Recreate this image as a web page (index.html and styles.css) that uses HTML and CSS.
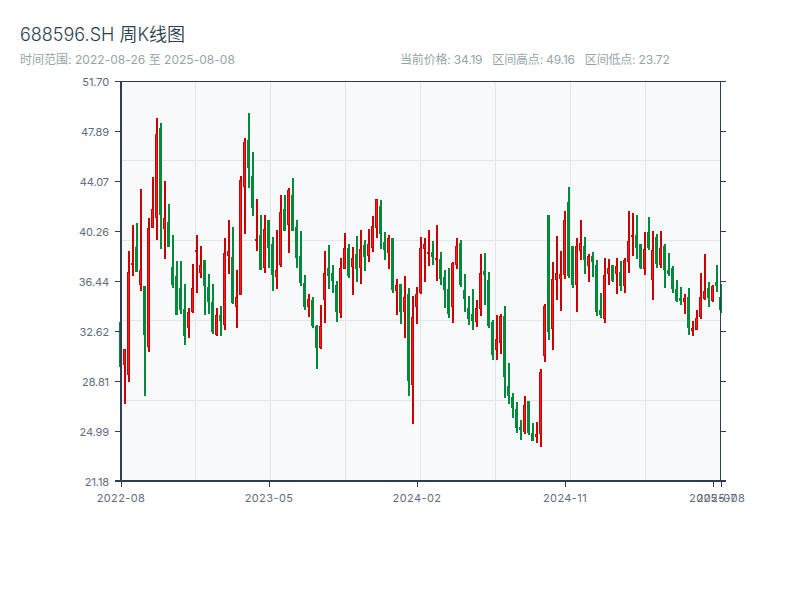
FILE: index.html
```html
<!DOCTYPE html>
<html>

<head>
    <meta charset="UTF-8">
    <title>688596.SH 周K线图</title>
    <link rel="stylesheet" href="styles.css">
</head>

<body>
    <div class="header">
        <h1 class="title">688596.SH 周K线图</h1>
        <div class="meta">
            <div class="range">时间范围: 2022-08-26 至 2025-08-08</div>
            <div class="stats">
                <span>当前价格: 34.19</span>
                <span>区间高点: 49.16</span>
                <span>区间低点: 23.72</span>
            </div>
        </div>
    </div>

    <svg id="chart" class="chart" width="800" height="450" viewBox="0 70 800 450"></svg>

    <script src="chart.js"></script>
</body>

</html>
```

FILE: styles.css
```css
body {
    font-family: Inter, "Noto Sans CJK SC", sans-serif;
    margin: 0;
    padding: 0;
    background-color: #fff;
    overflow: hidden;
}

.header {
    height: 70px;
    padding: 0 20px;
    box-sizing: border-box;
}

.title {
    margin: 0;
    padding-top: 23px;
    font-size: 18px;
    line-height: 24px;
    font-weight: 350;
    color: #2c3e50;
}

.meta {
    display: grid;
    grid-template-columns: 380px 1fr;
    margin-top: 4px;
    font-size: 12px;
    line-height: 18px;
    color: #95a5a6;
}

.range {
    letter-spacing: 0.03px;
}

.stats {
    display: flex;
    gap: 10px;
    letter-spacing: -0.18px;
}

.chart {
    display: block;
}

.plot-bg {
    fill: #f8f9fb;
}

.grid-line {
    stroke: #e3e5ea;
    stroke-width: 1;
}

.axis-line {
    stroke: #2c3e50;
    stroke-width: 1;
}

.axis-line.thick {
    stroke-width: 2;
}

.axis-label {
    font-size: 11px;
    fill: #5d6d7e;
}

.axis-label.price {
    letter-spacing: -0.1px;
}

.axis-label.date {
    letter-spacing: 0.4px;
}

.wick-up {
    fill: #cc0000;
}

.body-up {
    fill: #ff1a1a;
    stroke: #cc0000;
    stroke-width: 1;
}

.wick-down,
.body-down {
    fill: #008a3a;
}
```

FILE: chart.js
```js
// [direction, wick top, wick bottom, body top, body bottom] in page pixels
var candles = [
    ['g', 322, 367, 322, 367], ['r', 349, 404, 349, 365], ['r', 251, 382, 272, 375], ['r', 225, 276, 263, 265],
    ['g', 223, 272, 247, 272], ['r', 189, 291, 270, 285], ['g', 286, 396, 286, 335], ['r', 218, 352, 228, 347],
    ['r', 177, 228, 209, 228], ['r', 118, 240, 134, 218], ['g', 123, 249, 128, 215], ['r', 181, 259, 218, 229],
    ['g', 204, 247, 222, 247], ['g', 235, 288, 267, 285], ['g', 261, 315, 276, 315], ['g', 261, 314, 288, 310],
    ['g', 284, 345, 309, 336], ['r', 308, 338, 312, 328], ['r', 264, 313, 288, 312], ['r', 235, 293, 250, 252],
    ['r', 246, 278, 265, 273], ['g', 260, 315, 260, 286], ['g', 274, 314, 287, 302], ['g', 284, 334, 302, 332],
    ['r', 308, 336, 315, 335], ['g', 306, 336, 315, 321], ['r', 238, 330, 253, 325], ['r', 220, 274, 251, 256],
    ['g', 227, 304, 257, 303], ['r', 270, 328, 297, 307], ['r', 176, 295, 180, 295], ['r', 138, 234, 142, 187],
    ['g', 113, 188, 140, 168], ['g', 152, 216, 176, 208], ['r', 199, 251, 239, 241], ['g', 215, 270, 235, 270],
    ['r', 215, 273, 229, 268], ['g', 220, 268, 220, 248], ['g', 237, 291, 244, 275], ['r', 230, 289, 270, 277],
    ['r', 195, 267, 212, 265], ['g', 195, 231, 209, 231], ['r', 188, 253, 190, 225], ['g', 178, 231, 195, 231],
    ['g', 220, 268, 227, 258], ['g', 231, 286, 256, 283], ['g', 275, 310, 283, 307], ['r', 294, 317, 299, 307],
    ['g', 297, 328, 300, 326], ['g', 325, 369, 326, 348], ['r', 305, 349, 326, 348], ['r', 251, 323, 273, 300],
    ['g', 245, 289, 268, 276], ['g', 265, 293, 273, 281], ['g', 281, 322, 285, 312], ['r', 258, 318, 268, 313],
    ['r', 233, 269, 248, 269], ['g', 244, 278, 248, 276], ['r', 247, 295, 258, 267], ['g', 236, 282, 254, 269],
    ['r', 230, 284, 249, 268], ['g', 240, 271, 245, 257], ['r', 229, 262, 244, 256], ['r', 216, 252, 226, 248],
    ['r', 199, 238, 199, 228], ['g', 200, 249, 206, 234], ['g', 232, 260, 242, 250], ['r', 235, 269, 238, 253],
    ['g', 238, 293, 238, 290], ['r', 279, 315, 285, 291], ['g', 284, 324, 284, 312], ['r', 276, 338, 297, 312],
    ['g', 288, 396, 294, 381], ['r', 296, 424, 317, 385], ['r', 287, 324, 294, 307], ['r', 237, 294, 248, 293],
    ['r', 238, 282, 244, 249], ['r', 230, 266, 252, 254], ['g', 241, 265, 252, 257], ['r', 225, 281, 258, 260],
    ['g', 252, 285, 259, 279], ['g', 270, 308, 277, 290], ['g', 268, 318, 289, 314], ['r', 262, 323, 263, 307],
    ['r', 238, 269, 246, 265], ['g', 240, 287, 243, 285], ['g', 274, 312, 290, 299], ['g', 296, 325, 308, 319],
    ['g', 289, 330, 314, 321], ['r', 300, 327, 308, 322], ['r', 254, 316, 273, 309], ['g', 253, 305, 271, 275],
    ['g', 272, 328, 280, 326], ['g', 320, 360, 322, 355], ['r', 315, 360, 339, 350], ['r', 314, 354, 316, 343],
    ['g', 306, 398, 316, 377], ['g', 363, 404, 386, 396], ['g', 393, 418, 397, 408], ['g', 402, 433, 409, 428],
    ['g', 420, 440, 427, 430], ['r', 396, 434, 405, 432], ['g', 401, 435, 401, 433], ['g', 423, 441, 433, 441],
    ['r', 422, 443, 434, 437], ['r', 369, 447, 372, 434], ['r', 304, 362, 306, 356], ['g', 215, 340, 215, 332],
    ['r', 262, 350, 279, 329], ['r', 236, 300, 273, 280], ['r', 251, 311, 274, 279], ['r', 211, 279, 220, 275],
    ['g', 187, 278, 202, 276], ['g', 246, 288, 246, 285], ['r', 238, 312, 246, 285], ['r', 220, 260, 243, 251],
    ['g', 237, 274, 246, 260], ['r', 254, 282, 256, 266], ['g', 252, 277, 256, 262], ['g', 260, 316, 265, 312],
    ['g', 293, 318, 310, 315], ['r', 258, 323, 275, 319], ['r', 259, 285, 268, 274], ['g', 265, 282, 265, 281],
    ['r', 258, 294, 266, 274], ['g', 261, 291, 272, 286], ['r', 258, 293, 260, 286], ['r', 211, 273, 241, 262],
    ['r', 213, 256, 235, 237], ['g', 215, 259, 235, 248], ['g', 244, 269, 244, 268], ['r', 232, 275, 249, 269],
    ['g', 217, 250, 232, 248], ['r', 231, 300, 250, 280], ['g', 234, 268, 237, 264], ['r', 231, 268, 248, 265],
    ['g', 244, 288, 246, 270], ['g', 253, 276, 270, 274], ['g', 266, 293, 268, 289], ['g', 280, 302, 289, 301],
    ['g', 287, 305, 298, 301], ['r', 294, 314, 298, 302], ['g', 288, 335, 297, 328], ['r', 321, 336, 328, 331],
    ['r', 310, 330, 318, 330], ['r', 273, 319, 297, 317], ['r', 254, 300, 291, 299], ['g', 282, 307, 288, 298],
    ['r', 285, 302, 286, 301], ['g', 265, 292, 282, 286], ['g', 284, 313, 297, 310]
];

var chart = document.getElementById('chart');
var left = 121, right = 720, top_ = 81, bottom = 481;

function add(tag, attrs, text) {
    var el = document.createElementNS('http://www.w3.org/2000/svg', tag);
    for (var key in attrs) {
        el.setAttribute(key, attrs[key]);
    }
    if (text) {
        el.textContent = text;
    }
    chart.appendChild(el);
}

function line(x1, y1, x2, y2, cls) {
    add('line', { x1: x1, y1: y1, x2: x2, y2: y2, 'class': cls });
}

add('rect', { x: left, y: top_, width: right - left, height: bottom - top_, 'class': 'plot-bg' });

[195.5, 270.5, 345.5, 420.5, 495.5, 570.5, 645.5].forEach(function (x) {
    line(x, top_, x, bottom, 'grid-line');
});
[160.5, 240.5, 320.5, 400.5].forEach(function (y) {
    line(left, y, right, y, 'grid-line');
});

candles.forEach(function (c, i) {
    var x = 121 + 4 * i;
    var up = c[0] === 'r';
    add('rect', { x: x - 1, y: c[1], width: 2, height: c[2] - c[1], 'class': up ? 'wick-up' : 'wick-down' });
    if (up) {
        add('rect', { x: x - 1.5, y: c[3] + 0.5, width: 2, height: Math.max(c[4] - c[3] - 1, 1), 'class': 'body-up' });
    } else {
        add('rect', { x: x - 2, y: c[3], width: 3, height: c[4] - c[3], 'class': 'body-down' });
    }
});

// axes
line(115, 81.5, 726, 81.5, 'axis-line');
line(115, 481, 726, 481, 'axis-line thick');
line(121, 81, 121, 482, 'axis-line thick');
line(720.5, 81, 720.5, 482, 'axis-line');

['51.70', '47.89', '44.07', '40.26', '36.44', '32.62', '28.81', '24.99', '21.18'].forEach(function (label, i) {
    var y = 81 + 50 * i;
    line(115, y + 0.5, 121, y + 0.5, 'axis-line');
    line(720, y + 0.5, 726, y + 0.5, 'axis-line');
    add('text', { x: 109, y: y + 4.5, 'text-anchor': 'end', 'class': 'axis-label price' }, label);
});

[[121, '2022-08'], [269, '2023-05'], [417, '2024-02'], [565, '2024-11'], [713, '2025-07'], [721, '2025-08']].forEach(function (t) {
    line(t[0] + 0.5, 481, t[0] + 0.5, 487, 'axis-line');
    add('text', { x: t[0], y: 501.5, 'text-anchor': 'middle', 'class': 'axis-label date' }, t[1]);
});
```
